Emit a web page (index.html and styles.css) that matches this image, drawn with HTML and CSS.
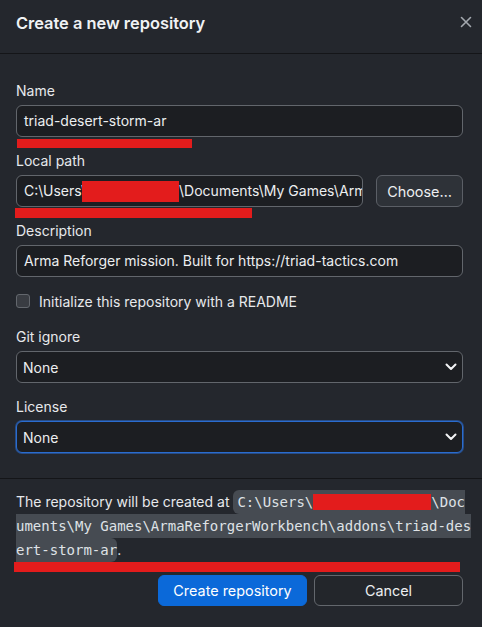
FILE: index.html
```html
<!DOCTYPE html>
<html>
<head>
<meta charset="utf-8">
<link rel="stylesheet" href="styles.css">
</head>
<body>
<div class="dialog">
  <header class="dialog-header">
    <h1 class="dialog-title">Create a new repository</h1>
    <button class="close-btn" aria-label="Close">
      <svg width="12" height="12" viewBox="0 0 12 12"><path d="M1.5 1.5 L10.5 10.5 M10.5 1.5 L1.5 10.5" stroke="#a3a8ae" stroke-width="1.6" stroke-linecap="round"/></svg>
    </button>
  </header>

  <div class="dialog-body">
    <div class="field">
      <label class="field-label">Name</label>
      <div class="text-input">triad-desert-storm-ar</div>
      <span class="redact redact-name"></span>
    </div>

    <div class="field">
      <label class="field-label">Local path</label>
      <div class="path-row">
        <div class="text-input path-input">C:\Users\<span class="redact-inline"></span>\Documents\My Games\ArmaReforgerWorkbench\addons</div>
        <button class="btn btn-secondary choose-btn">Choose…</button>
      </div>
      <span class="redact redact-path"></span>
    </div>

    <div class="field">
      <label class="field-label">Description</label>
      <div class="text-input">Arma Reforger mission. Built for https://triad-tactics.com</div>
    </div>

    <div class="check-row">
      <span class="checkbox"></span>
      <span class="check-label">Initialize this repository with a README</span>
    </div>

    <div class="field">
      <label class="field-label">Git ignore</label>
      <div class="select">
        <span>None</span>
        <svg class="chevron" width="12" height="8" viewBox="0 0 12 8"><path d="M1.5 1.5 L6 6 L10.5 1.5" fill="none" stroke="#f2f3f5" stroke-width="2" stroke-linecap="round" stroke-linejoin="round"/></svg>
      </div>
    </div>

    <div class="field">
      <label class="field-label">License</label>
      <div class="select select-focused">
        <span>None</span>
        <svg class="chevron" width="12" height="8" viewBox="0 0 12 8"><path d="M1.5 1.5 L6 6 L10.5 1.5" fill="none" stroke="#f2f3f5" stroke-width="2" stroke-linecap="round" stroke-linejoin="round"/></svg>
      </div>
    </div>
  </div>

  <footer class="dialog-footer">
    <p class="footer-text">The repository will be created at <code class="path-code">C:\Users\<span class="redact-code">xxxxxxxxxxxxxx</span>\Doc<br>uments\My Games\ArmaReforgerWorkbench\addons\triad-des<br>ert-storm-ar</code>.<span class="redact redact-footer"></span></p>
    <div class="footer-actions">
      <button class="btn btn-primary">Create repository</button>
      <button class="btn btn-cancel">Cancel</button>
    </div>
  </footer>
</div>
</body>
</html>
```
FILE: styles.css
```css
* { box-sizing: border-box; }

html, body {
  margin: 0;
  padding: 0;
  background: #24272d;
}

body {
  font-family: Inter, "Noto Sans", sans-serif;
  font-size: 14px;
  color: #e7e9ec;
}

.dialog {
  width: 482px;
  height: 627px;
  background: #24272d;
  display: flex;
  flex-direction: column;
}

/* Header */
.dialog-header {
  height: 54px;
  border-bottom: 1px solid #141518;
  display: flex;
  justify-content: space-between;
  align-items: flex-start;
  padding: 12px 10px 0 16px;
}

.dialog-title {
  margin: 0;
  font-size: 16.4px;
  font-weight: 600;
  line-height: 22px;
  color: #f0f2f4;
}

.close-btn {
  background: none;
  border: none;
  padding: 0;
  margin-top: 4px;
  width: 12px;
  height: 12px;
  display: flex;
}

/* Body */
.dialog-body {
  padding: 27px 19px 25px 16px;
  display: flex;
  flex-direction: column;
  gap: 14px;
  border-bottom: 1px solid #141518;
}

.field {
  display: flex;
  flex-direction: column;
  gap: 4px;
  position: relative;
}

.field-label {
  line-height: 20px;
  color: #e7e9ec;
}

.text-input {
  height: 32px;
  background: #1c1e22;
  border: 1px solid #62666c;
  border-radius: 6px;
  padding: 0 2px 0 7px;
  line-height: 30px;
  color: #eceef0;
  white-space: nowrap;
  overflow: hidden;
}

.path-row {
  display: flex;
  gap: 13px;
}

.path-input {
  flex: 1;
  padding-right: 4px;
}

.redact-inline {
  display: inline-block;
  width: 97px;
  height: 21px;
  background: #e31c1c;
  vertical-align: middle;
  margin-left: -4px;
  margin-top: -2px;
}

.btn {
  font-family: inherit;
  font-size: 14.4px;
  border-radius: 6px;
  cursor: pointer;
}

.choose-btn {
  width: 87px;
  height: 32px;
  background: #2e3238;
  border: 1px solid #5b5f66;
  color: #eceef0;
  padding: 0;
}

/* Redaction overlays */
.redact {
  position: absolute;
  background: #e31c1c;
}

.redact-name {
  left: 1px;
  top: 58px;
  width: 175px;
  height: 9px;
}

.redact-path {
  left: -1px;
  top: 57px;
  width: 237px;
  height: 10px;
}

/* Checkbox */
.check-row {
  display: flex;
  align-items: center;
  gap: 9px;
  height: 20px;
  margin-bottom: 2px;
}

.checkbox {
  width: 14px;
  height: 14px;
  border: 1px solid #63676d;
  background: #393c42;
  border-radius: 3px;
}

.check-label {
  color: #e7e9ec;
}

/* Select */
.select {
  height: 32px;
  background: #1c1e22;
  border: 1px solid #62666c;
  border-radius: 6px;
  padding: 0 5px 0 6px;
  display: flex;
  align-items: center;
  justify-content: space-between;
  color: #eceef0;
}

.select-focused {
  border-color: #2a6ccf;
  box-shadow: 0 0 0 1px rgba(42, 108, 207, 0.55);
}

/* Footer */
.dialog-footer {
  padding: 11px 19px 0 16px;
}

.footer-text {
  margin: 0;
  line-height: 24px;
  position: relative;
  color: #e7e9ec;
  white-space: nowrap;
}

.path-code {
  font-family: "DejaVu Sans Mono", "Liberation Mono", monospace;
  font-size: 14px;
  background: #464b52;
  color: #dfe2e6;
  padding: 4px 0 4px 4px;
  border-radius: 6px;
}

.redact-code {
  background: #e31c1c;
  color: transparent;
}

.redact-footer {
  left: -2px;
  top: 72px;
  width: 446px;
  height: 10px;
}

.footer-actions {
  display: flex;
  justify-content: flex-end;
  gap: 7px;
  margin-top: 13px;
}

.btn-primary {
  width: 149px;
  height: 31px;
  background: #0b69d9;
  border: 1px solid #0b69d9;
  color: #ffffff;
}

.btn-cancel {
  width: 149px;
  height: 31px;
  background: #23262b;
  border: 1px solid #63676d;
  color: #eceef0;
}
```
